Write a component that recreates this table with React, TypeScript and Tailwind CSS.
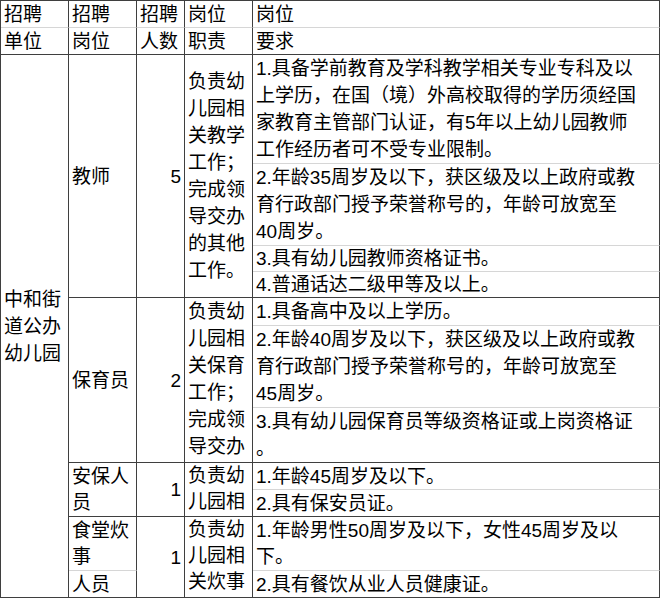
import React from 'react';
import clsx from 'clsx';

interface CellProps {
  pos: string;
  lines: string[];
  light?: boolean;
  top?: boolean;
  right?: boolean;
  tight?: boolean;
}

// one spreadsheet cell: fixed text lines, bottom rule is either a block border or a light gridline
const Cell = ({ pos, lines, light, top, right, tight }: CellProps) => (
  <div
    className={clsx(
      'flex flex-col overflow-hidden whitespace-nowrap border-r border-b border-r-[#3f3f3f] px-[3px]',
      tight ? 'leading-[26px]' : 'leading-[27px]',
      light ? 'border-b-[#d6d6d6]' : 'border-b-[#3f3f3f]',
      top ? 'justify-start' : 'justify-center',
      right ? 'items-end' : 'items-start',
      pos
    )}
  >
    {lines.map((line, i) => (
      <div key={i} className="shrink-0">
        {line}
      </div>
    ))}
  </div>
);

export default function App() {
  return (
    <div className="h-[598px] w-[660px] overflow-hidden bg-white font-['Liberation_Sans','Noto_Sans_CJK_SC',sans-serif] text-[19px] text-black">
      <div className="grid grid-cols-[68px_68px_48px_68px_407px] grid-rows-[27px_27px_109px_82px_26px_26px_28px_82px_55px_27px_27px_54px_27px] border-t border-l border-[#3f3f3f]">
        {/* header */}
        <Cell pos="col-start-1 row-start-1" lines={['招聘']} light />
        <Cell pos="col-start-1 row-start-2" lines={['单位']} />
        <Cell pos="col-start-2 row-start-1" lines={['招聘']} light />
        <Cell pos="col-start-2 row-start-2" lines={['岗位']} />
        <Cell pos="col-start-3 row-start-1" lines={['招聘']} light />
        <Cell pos="col-start-3 row-start-2" lines={['人数']} />
        <Cell pos="col-start-4 row-start-1" lines={['岗位']} light />
        <Cell pos="col-start-4 row-start-2" lines={['职责']} />
        <Cell pos="col-start-5 row-start-1" lines={['岗位']} light />
        <Cell pos="col-start-5 row-start-2" lines={['要求']} />

        {/* unit */}
        <Cell pos="col-start-1 row-start-3 row-span-11" lines={['中和街', '道公办', '幼儿园']} />

        {/* positions */}
        <Cell pos="col-start-2 row-start-3 row-span-4" lines={['教师']} />
        <Cell pos="col-start-2 row-start-7 row-span-3" lines={['保育员']} />
        <Cell pos="col-start-2 row-start-10 row-span-2" lines={['安保人', '员']} tight />
        <Cell pos="col-start-2 row-start-12" lines={['食堂炊', '事']} light tight />
        <Cell pos="col-start-2 row-start-13" lines={['人员']} />

        {/* headcount */}
        <Cell pos="col-start-3 row-start-3 row-span-4" lines={['5']} right />
        <Cell pos="col-start-3 row-start-7 row-span-3" lines={['2']} right />
        <Cell pos="col-start-3 row-start-10 row-span-2" lines={['1']} right />
        <Cell pos="col-start-3 row-start-12 row-span-2" lines={['1']} right />

        {/* duties */}
        <Cell
          pos="col-start-4 row-start-3 row-span-4"
          lines={['负责幼', '儿园相', '关教学', '工作；', '完成领', '导交办', '的其他', '工作。']}
        />
        <Cell
          pos="col-start-4 row-start-7 row-span-3"
          lines={['负责幼', '儿园相', '关保育', '工作；', '完成领', '导交办']}
          top
        />
        <Cell pos="col-start-4 row-start-10 row-span-2" lines={['负责幼', '儿园相']} top tight />
        <Cell pos="col-start-4 row-start-12 row-span-2" lines={['负责幼', '儿园相', '关炊事']} top tight />

        {/* requirements */}
        <Cell
          pos="col-start-5 row-start-3"
          lines={[
            '1.具备学前教育及学科教学相关专业专科及以',
            '上学历，在国（境）外高校取得的学历须经国',
            '家教育主管部门认证，有5年以上幼儿园教师',
            '工作经历者可不受专业限制。',
          ]}
          light
        />
        <Cell
          pos="col-start-5 row-start-4"
          lines={['2.年龄35周岁及以下，获区级及以上政府或教', '育行政部门授予荣誉称号的，年龄可放宽至', '40周岁。']}
          light
        />
        <Cell pos="col-start-5 row-start-5" lines={['3.具有幼儿园教师资格证书。']} light />
        <Cell pos="col-start-5 row-start-6" lines={['4.普通话达二级甲等及以上。']} />
        <Cell pos="col-start-5 row-start-7" lines={['1.具备高中及以上学历。']} light />
        <Cell
          pos="col-start-5 row-start-8"
          lines={['2.年龄40周岁及以下，获区级及以上政府或教', '育行政部门授予荣誉称号的，年龄可放宽至', '45周岁。']}
          light
        />
        <Cell pos="col-start-5 row-start-9" lines={['3.具有幼儿园保育员等级资格证或上岗资格证', '。']} />
        <Cell pos="col-start-5 row-start-10" lines={['1.年龄45周岁及以下。']} light />
        <Cell pos="col-start-5 row-start-11" lines={['2.具有保安员证。']} />
        <Cell pos="col-start-5 row-start-12" lines={['1.年龄男性50周岁及以下，女性45周岁及以', '下。']} light tight />
        <Cell pos="col-start-5 row-start-13" lines={['2.具有餐饮从业人员健康证。']} />
      </div>
    </div>
  );
}
